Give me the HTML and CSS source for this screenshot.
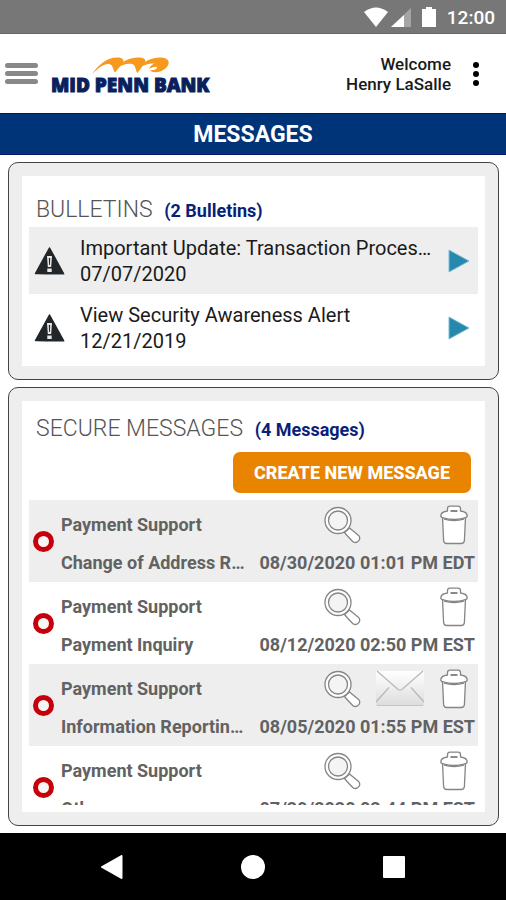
FILE: index.html
```html
<!DOCTYPE html>
<html lang="en">
<head>
<meta charset="utf-8">
<meta name="viewport" content="width=device-width, initial-scale=1">
<title>Mid Penn Bank - Messages</title>
<link rel="stylesheet" href="styles.css">
</head>
<body>
<svg class="defs" aria-hidden="true">
  <defs>
    <linearGradient id="paper" x1="0" y1="0" x2="0" y2="1">
      <stop offset="0" stop-color="#ffffff"/>
      <stop offset="1" stop-color="#dcdcdc"/>
    </linearGradient>
    <symbol id="warning" viewBox="0 0 32 30">
      <path d="M3 29h28l-2-3z" fill="#b5b5b5"/>
      <path d="M15.500 2 29.500 27.500H1.500z" fill="#20262a" stroke="#20262a" stroke-width="1.500" stroke-linejoin="round"/>
      <path d="M13 10h5l-.8 11h-3.400zM13.300 22.500h4.400V26h-4.400z" fill="#e8e8e8"/>
      <path d="M14.800 12h1.400l-.3 7h-.8z" fill="#20262a"/>
    </symbol>
    <symbol id="arrow" viewBox="0 0 22 24">
      <path d="M1 1v22l20-11z" fill="#2589ae" stroke="#7dbdd3" stroke-width="1"/>
    </symbol>
    <symbol id="search" viewBox="0 0 38 38">
      <g fill="#fff" stroke="#858585" stroke-width="1.300" stroke-linejoin="round">
        <path d="M20.500 26.500 25.500 22l8.800 7.300c4.200 3.600-1.600 9.300-5.600 6.200L23.500 30z"/>
        <circle cx="14" cy="14.500" r="13"/>
        <circle cx="14" cy="14.500" r="9.500" fill="#f4f4f4"/>
      </g>
    </symbol>
    <symbol id="trash" viewBox="0 0 28 40">
      <g fill="#fff" stroke="#858585" stroke-width="1.300" stroke-linejoin="round">
        <path d="M2.500 12 3.600 35.500Q3.800 38.500 6.800 38.500h14.400q3 0 3.200-3L25.500 12z"/>
        <path d="M7.500 6V3.500Q7.500 1.200 10 1.200h8q2.500 0 2.500 2.300V6c4 .5 6.700 2.500 6.700 5 0 1.500-1.700 1.700-3.200 2Q14 16 4 13C2.500 12.700.8 12.500.8 11c0-2.500 2.700-4.500 6.700-5z"/>
        <path d="M4 14.200Q14 17 24 14.200" fill="none"/>
        <path d="M10.500 5h7v2h-7z" fill="#8a8a8a" stroke="none"/>
      </g>
    </symbol>
    <symbol id="mail" viewBox="0 0 50 37">
      <path d="M1 1h48v33q0 2-2 2H3q-2 0-2-2z" fill="url(#paper)"/>
      <path d="M2 35.500h46" stroke="#c4c4c4" stroke-width="1.200"/>
      <path d="m2 1 20.500 18q2.500 2 5 0L48 1M14 17.500 1 32M36 17.500 49 32" fill="none" stroke="#b8b8b8" stroke-width="1.200"/>
    </symbol>
  </defs>
</svg>

<div class="status">
  <svg class="status-icons" viewBox="0 0 76 22" aria-hidden="true">
    <path d="M1 5Q13 -4 25 5L13 20z" fill="#fff"/>
    <path d="M48 1v19H28z" fill="#a5a5a5"/>
    <path d="M41 8v12H28z" fill="#fff"/>
    <path d="M63 0h6v2h4v18H59V2h4z" fill="#fff"/>
  </svg>
  <span>12:00</span>
</div>

<header class="header">
  <button class="menu" type="button" aria-label="Menu"><i></i><i></i><i></i></button>
  <div class="brand">
    <svg class="brand-mark" viewBox="0 0 80 18" aria-hidden="true">
      <g fill="#f7991c">
        <path d="M0 17.500C6 8 15 .5 25 .5c6 0 8 2.500 5 6.500l-7 8.500C20.500 12.500 21.500 8 17 7 11 6.500 5 12 0 17.500z"/>
        <path d="M24.500 11C30 4 38 .5 46 .5c7 0 9 2.500 6 6.500l-6.500 9C43 13 44 8 40 7c-5-1-10 1-15.500 4z"/>
        <path d="M47 10.500C52 4 60 .5 68 .5c10 0 10.500 6 6 10.500-5 5-14 5.500-16 2 3 .5 7-.5 7-2.500 0-1.500-4-1-8 1.500C58 8.500 61 7 63 6.500c-6-.5-11 1.500-16 4z"/>
      </g>
    </svg>
    <span class="brand-name">MID PENN BANK</span>
  </div>
  <p class="welcome">Welcome<br>Henry LaSalle</p>
  <button class="more" type="button" aria-label="More options"><i></i><i></i><i></i></button>
</header>

<h1 class="title">MESSAGES</h1>

<main class="content">
  <section class="panel">
    <div class="card bulletins">
      <h2>BULLETINS <small>(2 Bulletins)</small></h2>
      <a class="bulletin" href="#b1">
        <svg class="warning"><use href="#warning"/></svg>
        <span class="bulletin-text"><span>Important Update: Transaction Processing</span><time>07/07/2020</time></span>
        <svg class="arrow"><use href="#arrow"/></svg>
      </a>
      <a class="bulletin" href="#b2">
        <svg class="warning"><use href="#warning"/></svg>
        <span class="bulletin-text"><span>View Security Awareness Alert</span><time>12/21/2019</time></span>
        <svg class="arrow"><use href="#arrow"/></svg>
      </a>
    </div>
  </section>

  <section class="panel secure">
    <div class="card">
      <h2>SECURE MESSAGES <small>(4 Messages)</small></h2>
      <button class="create" type="button">CREATE NEW MESSAGE</button>
      <ul class="messages">
        <li class="message">
          <i class="ring"></i>
          <span class="sender">Payment Support</span>
          <div class="actions">
            <button type="button" aria-label="View"><svg class="search"><use href="#search"/></svg></button>
            <button class="delete" type="button" aria-label="Delete"><svg class="trash"><use href="#trash"/></svg></button>
          </div>
          <span class="subject">Change of Address Request</span>
          <time>08/30/2020 01:01 PM EDT</time>
        </li>
        <li class="message">
          <i class="ring"></i>
          <span class="sender">Payment Support</span>
          <div class="actions">
            <button type="button" aria-label="View"><svg class="search"><use href="#search"/></svg></button>
            <button class="delete" type="button" aria-label="Delete"><svg class="trash"><use href="#trash"/></svg></button>
          </div>
          <span class="subject">Payment Inquiry</span>
          <time>08/12/2020 02:50 PM EST</time>
        </li>
        <li class="message">
          <i class="ring"></i>
          <span class="sender">Payment Support</span>
          <div class="actions">
            <button type="button" aria-label="View"><svg class="search"><use href="#search"/></svg></button>
            <button type="button" aria-label="Reply"><svg class="mail"><use href="#mail"/></svg></button>
            <button class="delete" type="button" aria-label="Delete"><svg class="trash"><use href="#trash"/></svg></button>
          </div>
          <span class="subject">Information Reporting Help</span>
          <time>08/05/2020 01:55 PM EST</time>
        </li>
        <li class="message">
          <i class="ring"></i>
          <span class="sender">Payment Support</span>
          <div class="actions">
            <button type="button" aria-label="View"><svg class="search"><use href="#search"/></svg></button>
            <button class="delete" type="button" aria-label="Delete"><svg class="trash"><use href="#trash"/></svg></button>
          </div>
          <span class="subject">Other</span>
          <time>07/29/2020 02:44 PM EST</time>
        </li>
      </ul>
    </div>
  </section>
</main>

<nav class="navbar">
  <button type="button" aria-label="Back"><svg viewBox="0 0 24 24"><path d="M21.500 1v22L2 12z" stroke="#fff" stroke-width="2" stroke-linejoin="round"/></svg></button>
  <button type="button" aria-label="Home"><svg viewBox="0 0 24 24"><circle cx="12" cy="12" r="12"/></svg></button>
  <button type="button" aria-label="Recent apps"><svg viewBox="0 0 24 24"><rect x="1" y="1" width="22" height="22" rx="1"/></svg></button>
</nav>
</body>
</html>
```
FILE: styles.css
```css
* {
  box-sizing: border-box;
}

body {
  margin: 0;
  height: 100vh;
  display: flex;
  flex-direction: column;
  background: #fff;
  color: #1a1a1a;
  font-family: Roboto, "Liberation Sans", sans-serif;
}

button {
  padding: 0;
  border: 0;
  background: none;
  font: inherit;
}

h1,
h2,
p,
ul {
  margin: 0;
  padding: 0;
}

svg {
  display: block;
  flex: none;
}

.defs {
  position: absolute;
  width: 0;
  height: 0;
}

.status {
  flex: none;
  height: 34px;
  padding: 2px 11px 0 0;
  display: flex;
  align-items: center;
  justify-content: flex-end;
  gap: 8px;
  background: #777;
  border-bottom: 1px solid #666;
  color: #fff;
  font-size: 19px;
  font-weight: 500;
}

.status-icons {
  width: 76px;
  height: 22px;
}

.header {
  flex: none;
  height: 79px;
  padding: 0 27px 0 5px;
  display: flex;
  align-items: center;
}

.menu {
  width: 33px;
  display: grid;
  gap: 3px;
}

.menu i {
  height: 5px;
  border-radius: 3px;
  background: #888;
}

.brand {
  margin: 4px 0 0 13px;
  display: flex;
  flex-direction: column;
}

.brand-mark {
  width: 80px;
  height: 18px;
  margin-left: 41px;
}

.brand-name {
  color: #0b1f5c;
  font-family: "Open Sans", sans-serif;
  font-size: 19px;
  font-weight: 800;
  line-height: 20px;
  -webkit-text-stroke: 1px #0b1f5c;
}

.welcome {
  margin-left: auto;
  text-align: right;
  font-size: 17px;
  font-weight: 500;
  line-height: 20px;
}

.more {
  margin-left: 22px;
  display: grid;
  gap: 3px;
}

.more i {
  width: 6px;
  height: 6px;
  border-radius: 50%;
  background: #000;
}

.title {
  flex: none;
  height: 42px;
  border: solid #001a63;
  border-width: 1px 0;
  background: #003478;
  color: #fff;
  text-align: center;
  font-size: 23px;
  font-weight: 700;
  line-height: 42px;
}

.content {
  flex: 1;
  min-height: 0;
  padding: 7px 7px 7px 8px;
  display: flex;
  flex-direction: column;
  gap: 7px;
}

.panel {
  flex: none;
  padding: 13px;
  border: 1px solid #444;
  border-radius: 10px;
  background: #eee;
}

.card {
  padding: 17px 7px 5px;
  background: #fff;
}

.secure {
  flex: 1;
  min-height: 0;
}

.secure .card {
  height: 100%;
  padding-top: 11px;
  padding-bottom: 7px;
  display: flex;
  flex-direction: column;
}

h2 {
  padding-left: 7px;
  color: #555;
  font-size: 23px;
  font-weight: 300;
  line-height: 34px;
}

h2 small {
  margin-left: 6px;
  color: #0a1f78;
  font-size: 18px;
  font-weight: 700;
  line-height: 1;
}

.bulletin {
  height: 67px;
  padding: 0 8px 0 5px;
  display: flex;
  align-items: center;
  color: inherit;
  text-decoration: none;
}

.bulletin:nth-of-type(odd),
.message:nth-child(odd) {
  background: #eee;
}

.bulletin-text {
  flex: 1;
  min-width: 0;
  margin: 0 12px 0 14px;
  font-size: 20px;
  line-height: 26px;
}

.bulletin-text > * {
  display: block;
  overflow: hidden;
  white-space: nowrap;
  text-overflow: ellipsis;
}

.warning {
  width: 32px;
  height: 30px;
}

.arrow {
  width: 22px;
  height: 24px;
}

.create {
  align-self: flex-end;
  flex: none;
  height: 41px;
  margin: 6px 7px 7px 0;
  padding: 0 21px;
  border-radius: 7px;
  background: #e88400;
  color: #fff;
  font-size: 18px;
  font-weight: 800;
}

.messages {
  flex: 1;
  min-height: 0;
  overflow: hidden;
  list-style: none;
}

.message {
  height: 82px;
  padding: 4px 3px 3px 4px;
  display: grid;
  grid-template-columns: 28px 1fr auto;
  grid-template-rows: 41px 1fr;
  align-items: center;
  color: #626262;
  font-size: 18px;
  font-weight: 700;
}

.ring {
  grid-row: span 2;
  width: 21px;
  height: 21px;
  border: 5px solid #c4000d;
  border-radius: 50%;
  background: #f6f6f6;
}

.subject {
  overflow: hidden;
  margin-right: 8px;
  white-space: nowrap;
  text-overflow: ellipsis;
}

.actions {
  display: grid;
  grid-template-columns: 38px 52px 28px;
  justify-content: end;
  justify-items: start;
  align-items: center;
  column-gap: 13px;
  padding-right: 7px;
}

.delete {
  grid-column: 3;
}

.search {
  width: 38px;
  height: 38px;
}

.mail {
  width: 50px;
  height: 37px;
}

.trash {
  width: 28px;
  height: 40px;
}

.navbar {
  flex: none;
  height: 67px;
  display: flex;
  align-items: center;
  justify-content: center;
  gap: 117px;
  background: #000;
}

.navbar svg {
  width: 24px;
  height: 24px;
  fill: #fff;
}
```
